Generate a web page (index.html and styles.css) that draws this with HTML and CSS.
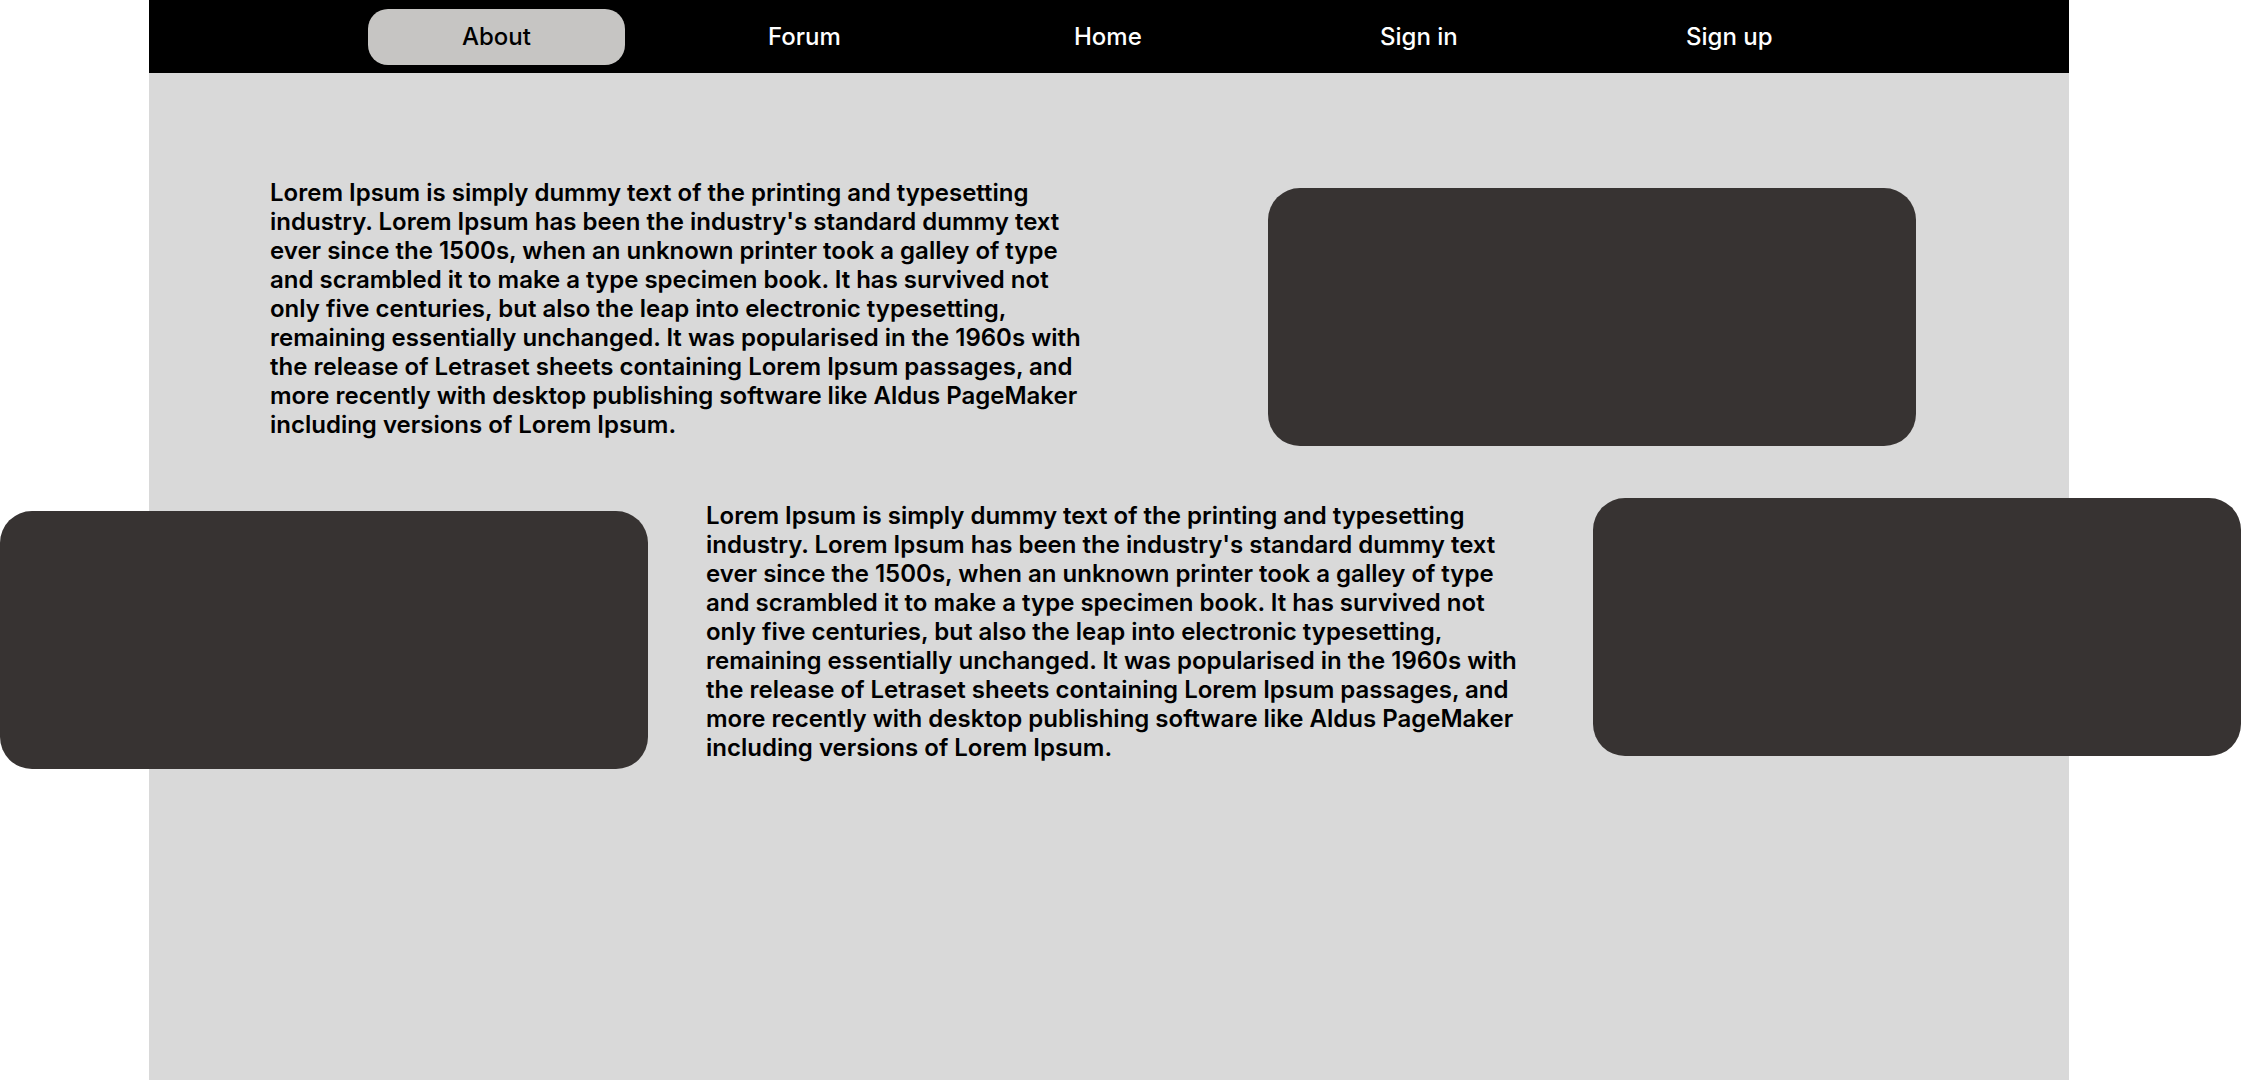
FILE: index.html
```html
<!DOCTYPE html>
<html lang="en">
<head>
<meta charset="utf-8">
<title>About</title>
<link rel="stylesheet" href="styles.css">
</head>
<body>
<div class="page">
  <nav class="nav">
    <a class="nav-item active" href="#">About</a>
    <a class="nav-item" href="#">Forum</a>
    <a class="nav-item" href="#">Home</a>
    <a class="nav-item" href="#">Sign in</a>
    <a class="nav-item" href="#">Sign up</a>
  </nav>
  <section class="row row-one">
    <p class="copy copy-one">Lorem Ipsum is simply dummy text of the printing and typesetting industry. Lorem Ipsum has been the industry's standard dummy text ever since the 1500s, when an unknown printer took a galley of type and scrambled it to make a type specimen book. It has survived not only five centuries, but also the leap into electronic typesetting, remaining essentially unchanged. It was popularised in the 1960s with the release of Letraset sheets containing Lorem Ipsum passages, and more recently with desktop publishing software like Aldus PageMaker including versions of Lorem Ipsum.</p>
    <div class="card card-one"></div>
  </section>
  <section class="row row-two">
    <div class="card card-left"></div>
    <p class="copy copy-two">Lorem Ipsum is simply dummy text of the printing and typesetting industry. Lorem Ipsum has been the industry's standard dummy text ever since the 1500s, when an unknown printer took a galley of type and scrambled it to make a type specimen book. It has survived not only five centuries, but also the leap into electronic typesetting, remaining essentially unchanged. It was popularised in the 1960s with the release of Letraset sheets containing Lorem Ipsum passages, and more recently with desktop publishing software like Aldus PageMaker including versions of Lorem Ipsum.</p>
    <div class="card card-right"></div>
  </section>
</div>
</body>
</html>
```
FILE: styles.css
```css
html, body {
  margin: 0;
  padding: 0;
  background: #ffffff;
  overflow: hidden;
}

body {
  font-family: "Inter", "Noto Sans", sans-serif;
}

.page {
  width: 1920px;
  min-height: 1080px;
  margin-left: 149px;
  background: #d9d9d9;
}

.nav {
  height: 73px;
  background: #000000;
  display: flex;
  align-items: center;
  gap: 49px;
  padding-left: 219px;
  box-sizing: border-box;
}

.nav-item {
  width: 257px;
  height: 56px;
  display: flex;
  align-items: center;
  justify-content: flex-start;
  padding-left: 94px;
  box-sizing: border-box;
  color: #ffffff;
  text-decoration: none;
  font-size: 24px;
  font-weight: 500;
  border-radius: 20px;
}

.nav-item.active {
  background: #c6c5c3;
  color: #000000;
}

.row {
  display: flex;
  align-items: flex-start;
}

.copy {
  flex: none;
  margin: 0;
  width: 820px;
  font-size: 24px;
  font-weight: 600;
  line-height: normal;
  color: #000000;
}

.card {
  flex: none;
  width: 648px;
  height: 258px;
  background: #373332;
  border-radius: 32px;
}

.row-one {
  margin-top: 105px;
  padding-left: 121px;
  gap: 178px;
}

.card-one {
  margin-top: 10px;
}

.row-two {
  margin-top: 52px;
  margin-left: -149px;
  gap: 0;
}

.card-left {
  margin-top: 13px;
}

.copy-two {
  margin-left: 58px;
  margin-top: 3px;
}

.card-right {
  margin-left: 67px;
}
```
